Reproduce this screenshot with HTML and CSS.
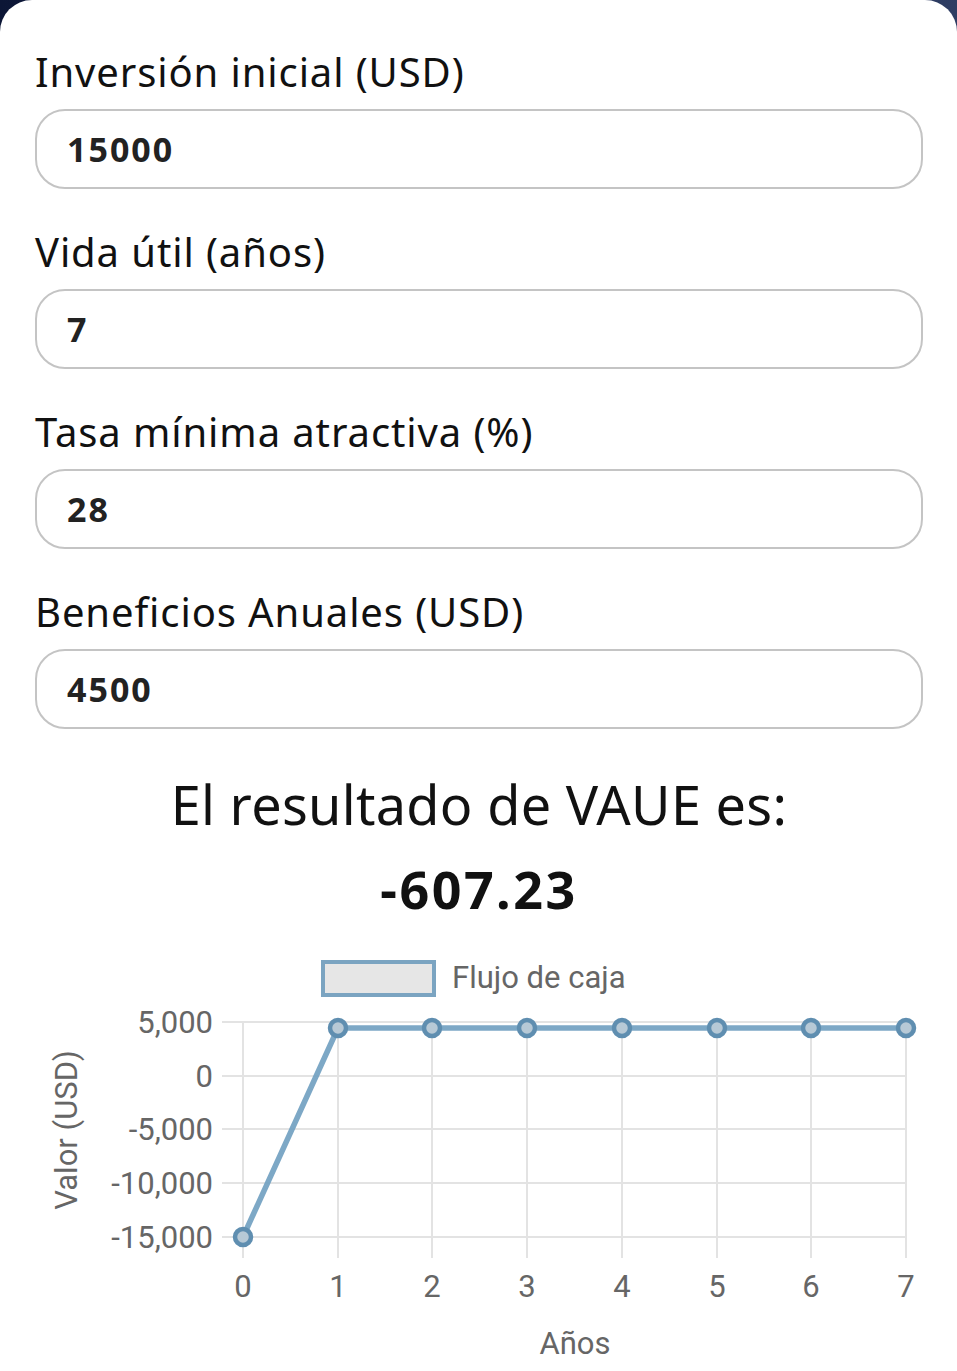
FILE: index.html
```html
<!DOCTYPE html>
<html lang="es">
<head>
<meta charset="utf-8">
<title>VAUE</title>
<link rel="stylesheet" href="styles.css">
</head>
<body>
<main class="card">
  <div class="field">
    <label class="label">Inversión inicial (USD)</label>
    <div class="input">15000</div>
  </div>
  <div class="field">
    <label class="label">Vida útil (años)</label>
    <div class="input">7</div>
  </div>
  <div class="field">
    <label class="label">Tasa mínima atractiva (%)</label>
    <div class="input">28</div>
  </div>
  <div class="field">
    <label class="label">Beneficios Anuales (USD)</label>
    <div class="input">4500</div>
  </div>
  <h2 class="result-title">El resultado de VAUE es:</h2>
  <p class="result-value">-607.23</p>
  <div class="chart">
    <svg width="887" height="431" viewBox="35 940 887 431" xmlns="http://www.w3.org/2000/svg">
      <g class="grid" stroke="#e3e3e3" stroke-width="2">
        <line x1="222" y1="1022" x2="906" y2="1022"/>
        <line x1="222" y1="1076" x2="906" y2="1076"/>
        <line x1="222" y1="1129" x2="906" y2="1129"/>
        <line x1="222" y1="1183" x2="906" y2="1183"/>
        <line x1="222" y1="1237" x2="906" y2="1237"/>
        <line x1="243" y1="1022" x2="243" y2="1258"/>
        <line x1="338" y1="1022" x2="338" y2="1258"/>
        <line x1="432" y1="1022" x2="432" y2="1258"/>
        <line x1="527" y1="1022" x2="527" y2="1258"/>
        <line x1="622" y1="1022" x2="622" y2="1258"/>
        <line x1="717" y1="1022" x2="717" y2="1258"/>
        <line x1="811" y1="1022" x2="811" y2="1258"/>
        <line x1="906" y1="1022" x2="906" y2="1258"/>
      </g>
      <g class="ticks" font-family="Roboto, 'Liberation Sans', sans-serif" font-size="31" fill="#666">
        <text x="213" y="1033" text-anchor="end">5,000</text>
        <text x="213" y="1087" text-anchor="end">0</text>
        <text x="213" y="1140" text-anchor="end">-5,000</text>
        <text x="213" y="1194" text-anchor="end">-10,000</text>
        <text x="213" y="1248" text-anchor="end">-15,000</text>
        <text x="243" y="1297" text-anchor="middle">0</text>
        <text x="338" y="1297" text-anchor="middle">1</text>
        <text x="432" y="1297" text-anchor="middle">2</text>
        <text x="527" y="1297" text-anchor="middle">3</text>
        <text x="622" y="1297" text-anchor="middle">4</text>
        <text x="717" y="1297" text-anchor="middle">5</text>
        <text x="811" y="1297" text-anchor="middle">6</text>
        <text x="906" y="1297" text-anchor="middle">7</text>
        <text x="575" y="1354" text-anchor="middle">Años</text>
        <text x="0" y="0" text-anchor="middle" transform="translate(77 1130) rotate(-90)">Valor (USD)</text>
        <text x="452" y="988">Flujo de caja</text>
      </g>
      <rect x="323" y="962" width="111" height="33" fill="#e6e6e6" stroke="#7ba4c1" stroke-width="4"/>
      <polyline points="243,1237 338,1028 432,1028 527,1028 622,1028 717,1028 811,1028 906,1028" fill="none" stroke="#6f9fc0" stroke-opacity="0.9" stroke-width="5.5" stroke-linejoin="round"/>
      <g fill="#b7c9d6" stroke="#5f8eb0" stroke-width="4.5">
        <circle cx="243" cy="1237" r="8"/>
        <circle cx="338" cy="1028" r="8"/>
        <circle cx="432" cy="1028" r="8"/>
        <circle cx="527" cy="1028" r="8"/>
        <circle cx="622" cy="1028" r="8"/>
        <circle cx="717" cy="1028" r="8"/>
        <circle cx="811" cy="1028" r="8"/>
        <circle cx="906" cy="1028" r="8"/>
      </g>
    </svg>
  </div>
</main>
</body>
</html>
```
FILE: styles.css
```css
html, body {
  margin: 0;
  padding: 0;
}
body {
  background: linear-gradient(to right, #0c1636, #2e3d63);
  font-family: "Noto Sans", "Open Sans", "Liberation Sans", sans-serif;
  width: 957px;
  height: 1371px;
  overflow: hidden;
}
.card {
  background: #fff;
  border-radius: 32px 32px 0 0;
  height: 1371px;
  box-sizing: border-box;
  padding: 48px 34px 0 35px;
  display: flex;
  flex-direction: column;
}
.field {
  display: flex;
  flex-direction: column;
  margin-bottom: 39px;
}
.label {
  display: block;
  font-size: 40px;
  letter-spacing: 0.9px;
  line-height: 48px;
  color: #111;
  margin-bottom: 13px;
}
.input {
  height: 80px;
  box-sizing: border-box;
  border: 2px solid #c4c4c4;
  border-radius: 30px;
  padding-left: 30px;
  display: flex;
  align-items: center;
  font-weight: 700;
  font-size: 34px;
  letter-spacing: 2px;
  color: #222;
}
.result-title {
  margin: 4px 0 0;
  text-align: center;
  font-weight: 400;
  font-size: 54px;
  letter-spacing: 0.3px;
  line-height: 64px;
  color: #111;
}
.result-value {
  margin: 22px 0 0;
  text-align: center;
  font-weight: 700;
  font-size: 52px;
  letter-spacing: 2.5px;
  line-height: 62px;
  color: #111;
}
.chart {
  margin-top: 20px;
  display: flex;
}
.chart svg {
  display: block;
}
```
